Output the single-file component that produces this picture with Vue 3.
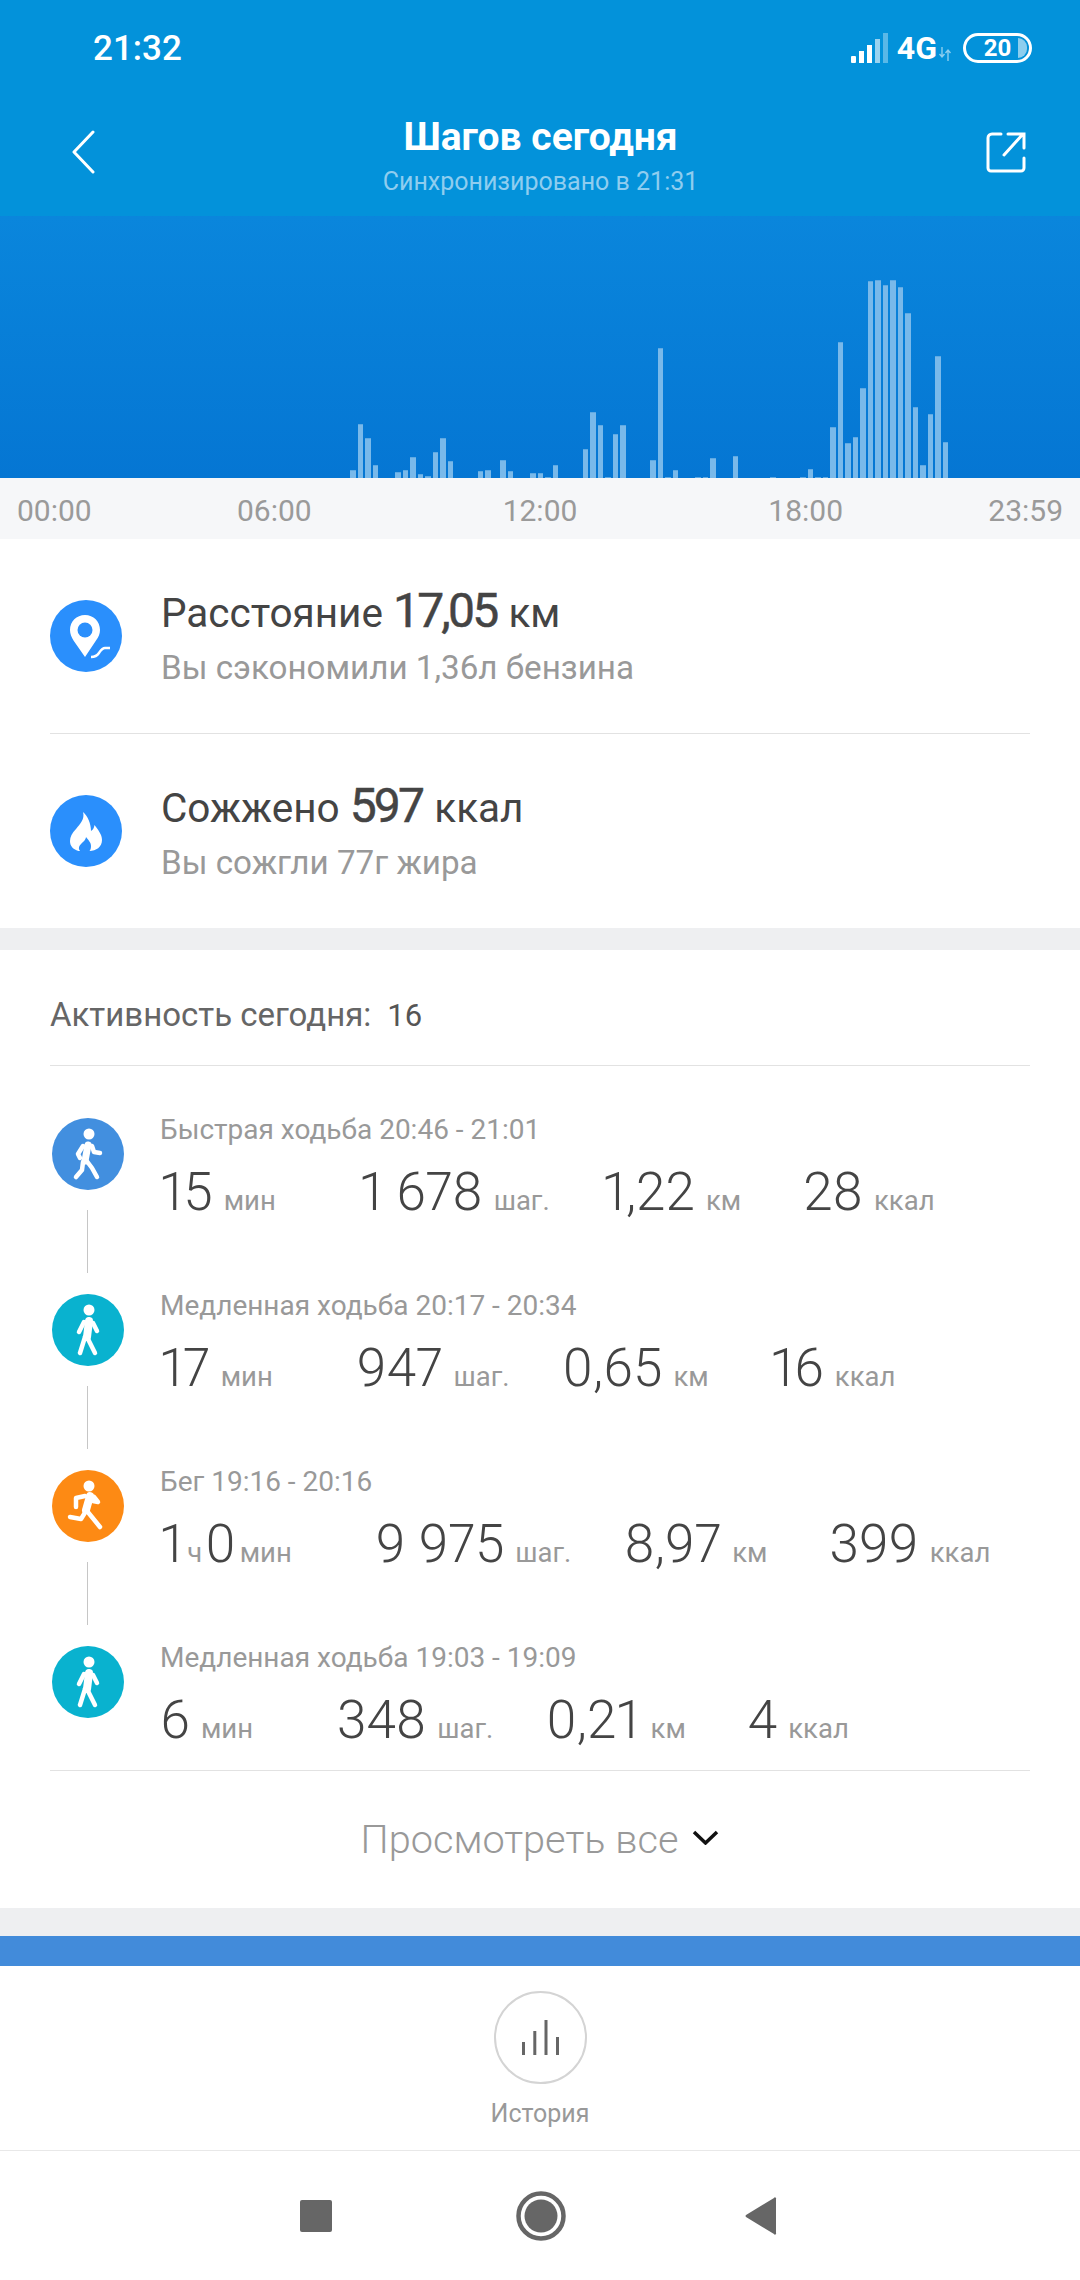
<script setup>
const bars = {
  0: 8, 1: 54, 2: 40, 3: 13, 6: 6, 7: 8, 8: 21, 9: 4, 10: 2, 11: 26, 12: 40, 13: 17,
  17: 7, 18: 8, 20: 18, 21: 7, 24: 5, 25: 5, 26: 1, 27: 13,
  31: 29, 32: 66, 33: 53, 34: 1, 35: 44, 36: 53,
  40: 18, 41: 130, 42: 1, 43: 8, 46: 1, 47: 1, 48: 20, 51: 22, 56: 1,
  60: 1, 61: 9, 62: 1, 63: 1, 64: 51, 65: 136, 66: 35, 67: 41, 68: 90,
  69: 197, 70: 198, 71: 193, 72: 198, 73: 191, 74: 165, 75: 71, 76: 13, 77: 64, 78: 122, 79: 36
};
const slots = Array.from({ length: 80 }, (_, i) => bars[i] || 0);

const activities = [
  {
    kind: "fast",
    title: "Быстрая ходьба 20:46 - 21:01",
    stats: [[["15", "мин"]], [["1 678", "шаг."]], [["1,22", "км"]], [["28", "ккал"]]]
  },
  {
    kind: "walk",
    title: "Медленная ходьба 20:17 - 20:34",
    stats: [[["17", "мин"]], [["947", "шаг."]], [["0,65", "км"]], [["16", "ккал"]]]
  },
  {
    kind: "run",
    title: "Бег 19:16 - 20:16",
    stats: [[["1", "ч"], ["0", "мин"]], [["9 975", "шаг."]], [["8,97", "км"]], [["399", "ккал"]]]
  },
  {
    kind: "walk",
    title: "Медленная ходьба 19:03 - 19:09",
    stats: [[["6", "мин"]], [["348", "шаг."]], [["0,21", "км"]], [["4", "ккал"]]]
  }
];
</script>

<template>
  <div class="page">
    <header class="top">
      <div class="status">
        <span class="clock">21:32</span>
        <div class="status-right">
          <svg width="40" height="30" viewBox="0 0 40 30">
            <rect x="0" y="23" width="5" height="7" rx="1" fill="#fff" />
            <rect x="8" y="18" width="5" height="12" fill="#fff" />
            <rect x="16" y="12" width="5" height="18" fill="#fff" />
            <rect x="24" y="6" width="5" height="24" fill="#fff" opacity="0.6" />
            <rect x="32" y="0" width="5" height="30" fill="#fff" opacity="0.35" />
          </svg>
          <span class="net">4G</span>
          <svg class="updown" width="12" height="14" viewBox="0 0 12 14">
            <path d="M3 0v9M0.5 7l2.5 3 2.5-3M9 14V4M6.5 6L9 3l2.5 3" fill="none" stroke="#fff" stroke-width="1.4" opacity="0.55" />
          </svg>
          <div class="battery"><span>20</span><i></i></div>
        </div>
      </div>
      <div class="titlebar">
        <svg class="back" width="24" height="44" viewBox="0 0 24 44">
          <path d="M22 2 L3 22 L22 42" fill="none" stroke="#fff" stroke-width="3" stroke-linecap="round" stroke-linejoin="round" />
        </svg>
        <div class="titles">
          <div class="title">Шагов сегодня</div>
          <div class="subtitle">Синхронизировано в 21:31</div>
        </div>
        <svg class="share" width="40" height="42" viewBox="0 0 40 42">
          <path d="M15 3H6a4 4 0 0 0-4 4v30a3 3 0 0 0 3 3h30a3 3 0 0 0 3-3v-10" fill="none" stroke="#fff" stroke-width="3" stroke-linecap="round" />
          <path d="M18 24L37 3M22 3h16v14" fill="none" stroke="#fff" stroke-width="3" stroke-linecap="round" />
        </svg>
      </div>
    </header>

    <div class="chart">
      <div
        v-for="(h, i) in slots"
        :key="i"
        class="bar"
        :class="{ empty: !h }"
        :style="{ height: h + 'px' }"
      ></div>
    </div>
    <div class="axis">
      <span>00:00</span>
      <div class="axis-mid">
        <span>06:00</span>
        <span>12:00</span>
        <span>18:00</span>
      </div>
      <span>23:59</span>
    </div>

    <section class="summary">
      <div class="sum-row line">
        <svg class="sum-icon" viewBox="0 0 72 72">
          <circle cx="36" cy="36" r="36" fill="#2a8ffc" />
          <path d="M35 15c-8.500 0-15 6.500-15 15 0 4 1.500 7 3.500 10.500L35 57l11-16.500c2.500-3.500 4-6.500 4-10.500 0-8.500-6.500-15-15-15z" fill="#fff" />
          <circle cx="35" cy="30" r="7.500" fill="#2a8ffc" />
          <path d="M41 57c4 0 6-1 8-4s3-5 6-5h5" fill="none" stroke="#2a8ffc" stroke-width="6" />
          <path d="M41 57c4 0 6-1 8-4s3-5 6-5h5" fill="none" stroke="#fff" stroke-width="2.500" />
        </svg>
        <div>
          <div class="sum-main">Расстояние <b>17,05</b> км</div>
          <div class="sum-sub">Вы сэкономили 1,36л бензина</div>
        </div>
      </div>
      <div class="sum-row">
        <svg class="sum-icon" viewBox="0 0 72 72">
          <circle cx="36" cy="36" r="36" fill="#2a8ffc" />
          <path d="M33 17C35 24 30 29 26 34C22 38 20 42 20 46C20 51 23 54 27 55.500C28 56 29 56 30 56C27 52 31 49 33 47C35 45.500 36 43 36 42C38 45 41 47 41 51C41 53 40.500 55 39.500 56C46 56 52 52 52 45C52 39 48 35 44.500 30C44 33 43 35 41 36C41 29 38 21 33 17z" fill="#fff" />
        </svg>
        <div>
          <div class="sum-main">Сожжено <b>597</b> ккал</div>
          <div class="sum-sub">Вы сожгли 77г жира</div>
        </div>
      </div>
    </section>

    <section class="activity">
      <div class="act-head">Активность сегодня:<b>16</b></div>
      <div class="act-list">
        <div v-for="(a, n) in activities" :key="n" class="act">
          <div class="act-left">
            <svg class="act-icon" :class="a.kind" viewBox="0 0 72 72">
              <circle cx="36" cy="36" r="36" class="disc" />
              <circle cx="37" cy="16" r="5.500" fill="#fff" />
              <g v-if="a.kind === 'fast'" fill="none" stroke="#fff" stroke-width="4.500" stroke-linecap="round" stroke-linejoin="round">
                <path d="M36 27L33 43" stroke-width="7" />
                <path d="M31 28L26 36L28 40" />
                <path d="M40 28L42 34L48 35" />
                <path d="M34 42L40 50L45 59" />
                <path d="M31 44L30 52L24 59" />
              </g>
              <g v-else-if="a.kind === 'walk'" fill="none" stroke="#fff" stroke-width="4.500" stroke-linecap="round" stroke-linejoin="round">
                <path d="M37 27L35 43" stroke-width="8" />
                <path d="M32 28L27 38" />
                <path d="M41 29L45 37" />
                <path d="M33 43L28 59" />
                <path d="M35 43L43 59" />
              </g>
              <g v-else fill="none" stroke="#fff" stroke-width="4.500" stroke-linecap="round" stroke-linejoin="round">
                <path d="M38 26L34 40" stroke-width="8" />
                <path d="M33 26L24 28L24 37" />
                <path d="M42 27L46 32L41 31" />
                <path d="M34 41L29 49L18 47" />
                <path d="M35 41L48 57" />
              </g>
            </svg>
            <div v-if="n < activities.length - 1" class="connector"></div>
          </div>
          <div class="act-body">
            <div class="act-title">{{ a.title }}</div>
            <div class="act-stats">
              <div v-for="(s, k) in a.stats" :key="k" class="stat" :class="{ compound: s.length > 1 }">
                <template v-for="(part, p) in s" :key="p">
                  <span class="num">{{ part[0] }}</span>
                  <span class="unit">{{ part[1] }}</span>
                </template>
              </div>
            </div>
          </div>
        </div>
      </div>
      <div class="view-all">
        <span>Просмотреть все</span>
        <svg width="27" height="15" viewBox="0 0 27 15">
          <path d="M2 2L13.500 13L25 2" fill="none" stroke="#111" stroke-width="3.500" />
        </svg>
      </div>
    </section>

    <div class="band"></div>

    <div class="history">
      <div class="hist-circle">
        <svg width="37" height="35" viewBox="0 0 37 35">
          <path d="M1.500 35V22M12.800 35V11M24 35V0M35.500 35V17" fill="none" stroke="#666" stroke-width="3" />
        </svg>
      </div>
      <span>История</span>
    </div>

    <nav class="navbar">
      <svg width="32" height="32" viewBox="0 0 32 32"><rect width="32" height="32" rx="2" fill="#666" /></svg>
      <svg width="50" height="50" viewBox="0 0 50 50">
        <circle cx="25" cy="25" r="22.500" fill="none" stroke="#666" stroke-width="4.500" />
        <circle cx="25" cy="25" r="16.500" fill="#666" />
      </svg>
      <svg width="32" height="38" viewBox="0 0 32 38">
        <path d="M31 2v34a1 1 0 0 1-2 1L1 20a1.500 1.500 0 0 1 0-2L29 1a1 1 0 0 1 2 1z" fill="#666" />
      </svg>
    </nav>
  </div>
</template>

<style scoped>
.page {
  width: 1080px;
  height: 2280px;
  overflow: hidden;
  background: #fff;
  font-family: Roboto, "Noto Sans", sans-serif;
  display: flex;
  flex-direction: column;
}
.top {
  height: 216px;
  background: #0392da;
  color: #fff;
  flex: none;
}
.status {
  height: 94px;
  box-sizing: border-box;
  padding: 28px 48px 0 93px;
  display: flex;
  justify-content: space-between;
  align-items: flex-start;
}
.clock {
  font-size: 35px;
  font-weight: 500;
  line-height: 40px;
  margin-top: 1px;
}
.status-right {
  display: flex;
  align-items: center;
  height: 36px;
  margin-top: 2px;
}
.net {
  font-size: 32px;
  font-weight: 700;
  margin-left: 6px;
  line-height: 36px;
}
.updown {
  margin: 12px 12px 0 2px;
}
.battery {
  width: 69px;
  height: 30px;
  box-sizing: border-box;
  border: 3px solid #fff;
  border-radius: 15px;
  position: relative;
  display: flex;
  align-items: center;
  justify-content: center;
  font-size: 24px;
  font-weight: 700;
  overflow: hidden;
}
.battery i {
  position: absolute;
  right: 2px;
  top: 2px;
  width: 9px;
  height: 20px;
  border-radius: 0 10px 10px 0;
  background: rgba(255, 255, 255, 0.55);
}
.titlebar {
  display: flex;
  justify-content: space-between;
  align-items: flex-start;
  padding: 36px 54px 0 71px;
}
.share {
  margin-top: 1px;
}
.titles {
  text-align: center;
}
.title {
  font-size: 39px;
  font-weight: 700;
  line-height: 42px;
  margin-top: -14px;
}
.subtitle {
  font-size: 25px;
  color: #8fcdef;
  line-height: 30px;
  margin-top: 9px;
}
.chart {
  flex: none;
  height: 262px;
  box-sizing: border-box;
  padding-left: 350px;
  background: linear-gradient(#0a86dc, #0576d3);
  display: flex;
  align-items: flex-end;
  gap: 2px;
}
.bar {
  width: 5.500px;
  flex: none;
  box-sizing: border-box;
  background: #79b9ea;
  border-top: 1px solid #5ea9e3;
}
.bar.empty {
  border-top: 0;
  background: none;
}
.axis {
  flex: none;
  height: 61px;
  background: #f6f7f9;
  box-sizing: border-box;
  padding: 3px 17px 0;
  display: flex;
  justify-content: space-between;
  align-items: center;
  font-size: 30px;
  color: #9a9a9a;
}
.axis-mid {
  display: flex;
  gap: 191px;
}
.summary {
  flex: none;
  height: 389px;
  padding: 0 50px;
  border-bottom: 22px solid #eeeff1;
}
.sum-row {
  height: 194px;
  box-sizing: border-box;
  display: flex;
  align-items: center;
  gap: 39px;
}
.sum-row.line {
  height: 195px;
  border-bottom: 1px solid #e2e2e2;
}
.sum-icon {
  width: 72px;
  height: 72px;
  flex: none;
}
.sum-main {
  font-size: 40.500px;
  color: #444;
  line-height: 50px;
  margin-top: 2px;
}
.sum-main b {
  font-size: 48px;
  font-weight: 400;
  letter-spacing: -2.800px;
  margin-right: 2px;
  -webkit-text-stroke: 0.5px #444;
}
.sum-sub {
  font-size: 33.200px;
  color: #999;
  line-height: 40px;
  margin-top: 10px;
}
.activity {
  flex: none;
  height: 958px;
  box-sizing: border-box;
  padding: 0 50px;
  display: flex;
  flex-direction: column;
}
.act-head {
  flex: none;
  height: 116px;
  box-sizing: border-box;
  padding-top: 45px;
  font-size: 33px;
  line-height: 40px;
  color: #666;
  border-bottom: 1px solid #e2e2e2;
}
.act-head b {
  font-weight: 400;
  margin-left: 16px;
  font-size: 31px;
  color: #555;
}
.act-list {
  flex: none;
  height: 705px;
  box-sizing: border-box;
  padding-top: 52px;
  border-bottom: 1px solid #e2e2e2;
}
.act {
  display: flex;
  height: 176px;
}
.act-left {
  width: 110px;
  flex: none;
  padding-left: 2px;
  box-sizing: border-box;
}
.act-icon {
  display: block;
  width: 72px;
  height: 72px;
}
.act-icon.fast .disc {
  fill: #428fdf;
}
.act-icon.walk .disc {
  fill: #09b2cf;
}
.act-icon.run .disc {
  fill: #fd8a14;
}
.connector {
  width: 1px;
  height: 63px;
  margin: 20px 0 0 35px;
  background: #c6c6c6;
}
.act-title {
  font-size: 28px;
  line-height: 32px;
  color: #999;
  margin-top: -4px;
}
.act-stats {
  display: flex;
  align-items: baseline;
  margin-top: 16px;
  color: #444;
}
.stat {
  display: flex;
  align-items: baseline;
}
.stat:nth-child(1) {
  margin-right: 84px;
}
.stat:nth-child(2) {
  margin-right: 53px;
}
.stat:nth-child(3) {
  margin-right: 62px;
}
.num {
  font-size: 53px;
  font-weight: 300;
  line-height: 60px;
  font-variant-numeric: proportional-nums;
}
.unit {
  font-size: 27.500px;
  color: #999;
  margin-left: 11px;
}
.compound .unit {
  margin-left: 4px;
}
.compound .unit:not(:last-child) {
  margin-right: 3px;
}
.view-all {
  flex: 1;
  display: flex;
  align-items: center;
  justify-content: center;
  gap: 14px;
  font-size: 39.700px;
  font-weight: 300;
  color: #999;
}
.view-all svg {
  margin-bottom: 4px;
}
.band {
  flex: none;
  height: 58px;
  box-sizing: border-box;
  background: #428bda;
  border-top: 28px solid #eeeff1;
}
.history {
  flex: none;
  height: 185px;
  box-sizing: border-box;
  padding-top: 25px;
  border-bottom: 1px solid #e8e8e8;
  display: flex;
  flex-direction: column;
  align-items: center;
  font-size: 25px;
  color: #999;
}
.hist-circle {
  width: 93px;
  height: 93px;
  box-sizing: border-box;
  border: 2px solid #d4d4d4;
  border-radius: 50%;
  display: flex;
  align-items: center;
  justify-content: center;
  margin-bottom: 15px;
}
.navbar {
  flex: 1;
  display: flex;
  align-items: center;
  padding-left: 300px;
}
.navbar svg:nth-child(2) {
  margin-left: 184px;
}
.navbar svg:nth-child(3) {
  margin-left: 179px;
}
</style>

<style>
html,
body {
  margin: 0;
  background: #fff;
}
</style>
